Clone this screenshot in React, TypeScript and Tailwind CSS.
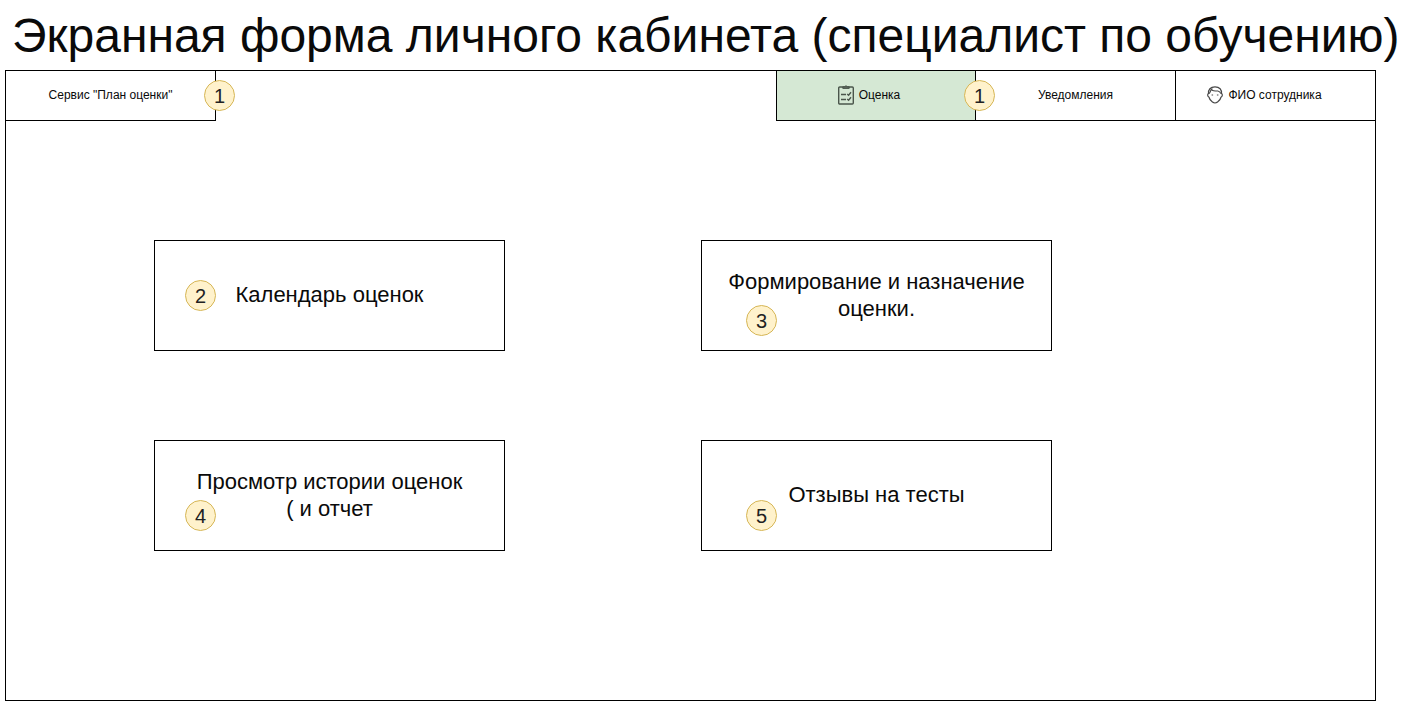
import clsx from 'clsx';
import type { ReactNode } from 'react';

function Badge({ value, className }: { value: number; className: string }) {
  return (
    <span
      className={clsx(
        'absolute z-10 flex size-[31px] items-center justify-center rounded-full border border-[#d6b656] bg-[#fff2cc] text-xl leading-6 text-[#222]',
        className,
      )}
    >
      {value}
    </span>
  );
}

function ClipboardIcon() {
  return (
    <svg aria-hidden="true" viewBox="0 0 16 20" className="h-5 w-4 shrink-0" fill="none" stroke="#4a554b">
      <rect x="0.7" y="2" width="14.6" height="17" rx="1" strokeWidth="1.4" />
      <path d="M4.8 3.4V1.8h1.8a1.5 1.4 0 0 1 2.8 0h1.8v1.6z" fill="#5c675d" strokeWidth="1" />
      <path d="M3 9.5h5M3 14.5h5" strokeWidth="1.3" />
      <path d="M9.2 9l1.4 1.3 2.4-3M9.2 14l1.4 1.3 2.4-3" strokeWidth="1.4" />
    </svg>
  );
}

function FaceIcon() {
  return (
    <svg aria-hidden="true" viewBox="0 0 16 18" className="h-[18px] w-4 shrink-0" fill="none" stroke="#484848" strokeLinejoin="round">
      <path d="M1.5 8C0.9 3.6 3.6 0.8 8 0.8S15.1 3.6 14.5 8" strokeWidth="1.2" />
      <path d="M1.5 7.6c-1.2 0.4-1.1 3 0.4 3.4 0.6 2.4 1.8 3.9 3.5 5.1 1.6 1.1 3.6 1.1 5.2 0 1.7-1.2 2.9-2.7 3.5-5.1 1.5-0.4 1.6-3 0.4-3.4" strokeWidth="1.2" />
      <path d="M2.2 7.6C3 6.4 3.6 5.4 4 3.6c1.8 1.4 4.4 1.4 6.9 1.4 1.6 0.2 2.4 1.2 3 2.6M4 3.6l1.5-0.8" strokeWidth="1.1" />
      <path d="M4.6 9h1.5M9.9 9h1.5" strokeWidth="1.2" />
    </svg>
  );
}

function Card({ children, badge, badgeClass }: { children: ReactNode; badge: number; badgeClass: string }) {
  return (
    <button
      type="button"
      className="relative flex h-[111px] items-center justify-center border border-black bg-white px-5 text-center text-[22px] leading-[27px]"
    >
      <span className="pb-0.5">{children}</span>
      <Badge value={badge} className={badgeClass} />
    </button>
  );
}

export default function App() {
  return (
    <div className="flex min-h-screen flex-col bg-white font-['Liberation_Sans',Arial,sans-serif] text-[#0a0a0a]">
      <h1 className="pt-[3px] pb-px pl-3 text-[48px] leading-[66px] whitespace-nowrap">
        Экранная форма личного кабинета (специалист по обучению)
      </h1>
      <main className="mr-[34px] ml-[5px] border border-black pb-[149px]">
        <header className="flex h-[50px] justify-between text-xs">
          <div className="relative flex w-[210px] items-center justify-center border-r border-b border-black pb-0.5">
            <a href="#service">Сервис "План оценки"</a>
            <Badge value={1} className="top-[9px] -right-5" />
          </div>
          <nav className="grid grid-cols-[199px_200px_200px]">
            <button
              type="button"
              className="relative flex items-center justify-center gap-[5px] border-b border-l border-black bg-[#d5e8d4] pr-[14px] pb-0.5"
            >
              <ClipboardIcon />
              Оценка
              <Badge value={1} className="top-[9px] -right-5" />
            </button>
            <button type="button" className="flex items-center justify-center border-b border-l border-black pb-0.5">
              Уведомления
            </button>
            <button
              type="button"
              className="flex items-center justify-center gap-[5px] border-b border-l border-black pr-[22px] pb-0.5"
            >
              <FaceIcon />
              ФИО сотрудника
            </button>
          </nav>
        </header>
        <section className="grid grid-cols-[351px_351px] gap-x-[196px] gap-y-[89px] pt-[119px] pl-[148px]">
          <Card badge={2} badgeClass="top-[39px] left-[30px]">
            Календарь оценок
          </Card>
          <Card badge={3} badgeClass="top-16 left-11">
            Формирование и назначение оценки.
          </Card>
          <Card badge={4} badgeClass="top-[59px] left-[30px]">
            Просмотр истории оценок
            <br />( и отчет
          </Card>
          <Card badge={5} badgeClass="top-[59px] left-11">
            Отзывы на тесты
          </Card>
        </section>
      </main>
    </div>
  );
}
